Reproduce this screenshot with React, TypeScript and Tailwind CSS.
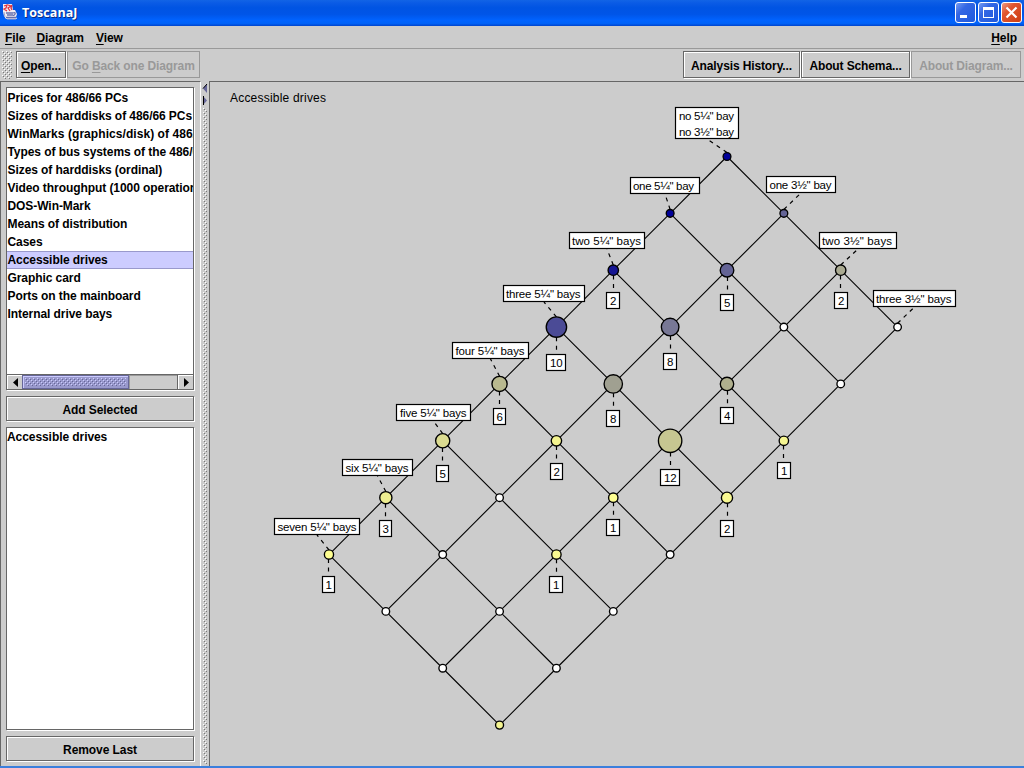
import React from "react";

const schemas = [
  "Prices for 486/66 PCs",
  "Sizes of harddisks of 486/66 PCs",
  "WinMarks (graphics/disk) of 486/66",
  "Types of bus systems of the 486/66",
  "Sizes of harddisks (ordinal)",
  "Video throughput (1000 operations)",
  "DOS-Win-Mark",
  "Means of distribution",
  "Cases",
  "Accessible drives",
  "Graphic card",
  "Ports on the mainboard",
  "Internal drive bays",
];

// Lattice nodes: [row along 5¼" axis, column along 3½" axis, radius, fill]
const styled: [number, number, number, string][] = [
  [0, 0, 3.9, "#000099"], [1, 0, 3.9, "#000099"], [0, 1, 3.9, "#646496"],
  [2, 0, 5.2, "#161693"], [1, 1, 6.8, "#646496"], [0, 2, 5.2, "#aaaa91"],
  [3, 0, 10.2, "#4b4b96"], [2, 1, 8.8, "#787896"], [3, 1, 9.2, "#a0a091"],
  [2, 2, 6.7, "#b0b08e"], [4, 0, 7.6, "#b9b98f"], [5, 0, 7.1, "#dcdc91"],
  [4, 1, 5.2, "#f3f38f"], [3, 2, 11.7, "#c6c691"], [2, 3, 4.7, "#f5f591"],
  [6, 0, 6.1, "#eeee91"], [4, 2, 4.7, "#ffff91"], [3, 3, 5.6, "#f8f891"],
  [7, 0, 4.6, "#ffff91"], [5, 2, 4.7, "#f8f891"], [7, 3, 4, "#f5f591"],
];

const px = (i: number, j: number) => 727 - 56.86 * i + 56.86 * j;
const py = (i: number, j: number) => 156.5 + 56.86 * (i + j);

const nodes: { i: number; j: number; r: number; fill: string }[] = [];
for (let i = 0; i < 8; i++)
  for (let j = 0; j < 4; j++) {
    const s = styled.find((n) => n[0] === i && n[1] === j);
    nodes.push({ i, j, r: s ? s[2] : 3.8, fill: s ? s[3] : "#ffffff" });
  }

// Attribute labels: [row, column, left, top, right, bottom, lines, text left, text right]
const labels: [number, number, number, number, number, number, string[], number, number][] = [
  [0, 0, 675, 107, 739, 139, ['no 5¼" bay', 'no 3½" bay'], 679, 734],
  [1, 0, 630, 177, 700, 194, ['one 5¼" bay'], 633, 694],
  [2, 0, 569, 232, 645, 249, ['two 5¼" bays'], 572, 641],
  [3, 0, 503, 285, 585, 302, ['three 5¼" bays'], 506, 580.5],
  [4, 0, 452, 342, 529, 359, ['four 5¼" bays'], 455.5, 524.5],
  [5, 0, 396, 404, 471, 421, ['five 5¼" bays'], 400, 466.5],
  [6, 0, 342, 459, 413, 476, ['six 5¼" bays'], 345.5, 408.5],
  [7, 0, 274, 518, 360, 535, ['seven 5¼" bays'], 277.5, 356.5],
  [0, 1, 766, 176, 836, 193, ['one 3½" bay'], 769.5, 831.5],
  [0, 2, 819, 232, 897, 249, ['two 3½" bays'], 822, 892],
  [0, 3, 873, 290, 956, 307, ['three 3½" bays'], 876, 951.5],
];

// Object counts: [row, column, left, top, right, value]
const counts: [number, number, number, number, number, string][] = [
  [2, 0, 606, 292, 620, "2"], [1, 1, 720, 294, 734, "5"], [0, 2, 834, 292, 848, "2"],
  [3, 0, 546, 354, 566, "10"], [2, 1, 663, 353, 677, "8"], [3, 1, 606, 410, 620, "8"],
  [2, 2, 720, 407, 734, "4"], [4, 0, 493, 408, 506, "6"], [5, 0, 436, 465, 449, "5"],
  [4, 1, 550, 463, 563, "2"], [3, 2, 660, 469, 680, "12"], [2, 3, 777, 462, 791, "1"],
  [6, 0, 379, 520, 392, "3"], [4, 2, 606, 519, 620, "1"], [3, 3, 720, 520, 734, "2"],
  [7, 0, 322, 576, 335, "1"], [5, 2, 549, 576, 563, "1"],
];

const radius = (i: number, j: number) => nodes[i * 4 + j].r;

function Diagram() {
  return (
    <svg
      width="814"
      height="684"
      viewBox="210 82 814 684"
      className="block font-['Liberation_Sans',sans-serif] font-normal tracking-normal"
    >
      <text x="230" y="102" fontSize="12" textLength="96">Accessible drives</text>
      <g stroke="#000" strokeWidth="1.1">
        {nodes.map(({ i, j }) => (
          <React.Fragment key={`${i}-${j}`}>
            {i < 7 && <line x1={px(i, j)} y1={py(i, j)} x2={px(i + 1, j)} y2={py(i + 1, j)} />}
            {j < 3 && <line x1={px(i, j)} y1={py(i, j)} x2={px(i, j + 1)} y2={py(i, j + 1)} />}
          </React.Fragment>
        ))}
      </g>
      <g stroke="#000" strokeWidth="1.35">
        {nodes.map(({ i, j, r, fill }) => (
          <circle key={`${i}-${j}`} cx={px(i, j)} cy={py(i, j)} r={r} fill={fill} />
        ))}
      </g>
      <g stroke="#000" strokeWidth="1.2" strokeDasharray="4 4.5">
        {labels.map(([i, j, l, , r, b]) => (
          <line key={`${i}-${j}`} x1={px(i, j)} y1={py(i, j) - radius(i, j)} x2={(l + r) / 2} y2={b} />
        ))}
        {counts.map(([i, j, , t]) => (
          <line key={`c${i}-${j}`} x1={Math.floor(px(i, j)) + 0.5} y1={py(i, j) + radius(i, j)} x2={Math.floor(px(i, j)) + 0.5} y2={t} />
        ))}
      </g>
      {labels.map(([i, j, l, t, r, b, lines, tl, tr]) => (
        <g key={`${i}-${j}`}>
          <rect x={l + 0.5} y={t + 0.5} width={r - l - 1} height={b - t - 1} fill="#fff" stroke="#000" strokeWidth="1.2" />
          {lines.map((s, k) => (
            <text key={s} x={tl} y={t + 13 + k * 16} fontSize="11.5" textLength={tr - tl}>{s}</text>
          ))}
        </g>
      ))}
      {counts.map(([i, j, l, t, r, v]) => (
        <g key={`${i}-${j}`}>
          <rect x={l + 0.5} y={t + 0.5} width={r - l - 1} height={16} fill="#fff" stroke="#000" strokeWidth="1.2" />
          <text x={(l + r) / 2 + 0.3} y={t + 13} fontSize="11.5" textAnchor="middle">{v}</text>
        </g>
      ))}
    </svg>
  );
}

function Btn({ children, disabled, className }: { children: React.ReactNode; disabled?: boolean; className: string }) {
  return (
    <div
      className={
        "box-border flex items-center justify-center whitespace-nowrap border pt-[2px] " +
        (disabled
          ? "border-[#999] text-[#999] "
          : "border-[#666] shadow-[inset_1px_1px_0_#fff,1px_1px_0_#fff] ") +
        className
      }
    >
      <span>{children}</span>
    </div>
  );
}

const U = ({ children }: { children: React.ReactNode }) => (
  <span className="underline decoration-1 underline-offset-2">{children}</span>
);

const bumps =
  "bg-[radial-gradient(circle_at_0.5px_0.5px,#fff_0.7px,transparent_0.8px),radial-gradient(circle_at_2.5px_2.5px,#fff_0.7px,transparent_0.8px),radial-gradient(circle_at_1.5px_1.5px,#777_0.7px,transparent_0.8px),radial-gradient(circle_at_3.5px_3.5px,#777_0.7px,transparent_0.8px)] bg-[length:4px_4px]";

function JavaIcon() {
  return (
    <svg width="16" height="16" viewBox="0 0 16 16" className="block">
      <path d="M1 0h9l1 6h2l2 4-1 3 1 2H4l-2-3-1-4Z" fill="#f1edf4" />
      <path d="M2 2l3-1-1 3-2 1 3 2M6 1l3 1-3 2 2 3M10 1l-1 3 1 2" fill="none" stroke="#e3343e" strokeWidth="1.3" />
      <path d="M4 9h7M5 11h6M4 13.5h10M11 9q3-1 2 1t-2 1" fill="none" stroke="#6670ad" strokeWidth="1.3" />
      <path d="M2 8l1 5M5 15h9" fill="none" stroke="#a8a7c9" />
    </svg>
  );
}

export default function App() {
  return (
    <div className="flex h-[768px] w-[1024px] flex-col overflow-hidden bg-[#ccc] font-['Liberation_Sans',sans-serif] text-[12px] font-bold leading-[18px] tracking-[-0.07px] text-black">
      <div className="flex h-[26px] shrink-0 items-center bg-[linear-gradient(#1264e6_0%,#0a5be5_12%,#0054e3_30%,#0055e8_55%,#0063ff_78%,#0062f8_90%,#0044cc_100%)] pl-[2px] pr-[2px]">
        <div className="-mt-[3px]"><JavaIcon /></div>
        <span className="ml-1 flex-1 font-['Open_Sans',sans-serif] text-[12.5px] tracking-[0.05px] text-white [text-shadow:1px_1px_0_#0a2a80]">ToscanaJ</span>
        <div className="-mt-px flex gap-[2px]">
          <svg width="21" height="21" viewBox="0 0 21 21">
            <defs>
              <linearGradient id="blue" x1="0" y1="0" x2="1" y2="1">
                <stop offset="0" stopColor="#7ba0f3" /><stop offset=".35" stopColor="#3467e4" /><stop offset="1" stopColor="#1c58dd" />
              </linearGradient>
              <linearGradient id="red" x1="0" y1="0" x2="1" y2="1">
                <stop offset="0" stopColor="#f0a08a" /><stop offset=".35" stopColor="#e1562f" /><stop offset="1" stopColor="#cc3d12" />
              </linearGradient>
            </defs>
            <rect x=".5" y=".5" width="20" height="20" rx="2.5" fill="url(#blue)" stroke="#fff" />
            <path d="M5 13h7v3H5z" fill="#fff" />
          </svg>
          <svg width="21" height="21" viewBox="0 0 21 21">
            <rect x=".5" y=".5" width="20" height="20" rx="2.5" fill="url(#blue)" stroke="#fff" />
            <path d="M5 5h11v11H5zM6 8v7h9V8z" fillRule="evenodd" fill="#fff" />
          </svg>
          <svg width="21" height="21" viewBox="0 0 21 21">
            <rect x=".5" y=".5" width="20" height="20" rx="2.5" fill="url(#red)" stroke="#fff" />
            <path d="M5.5 5.5l10 10m0-10l-10 10" stroke="#fff" strokeWidth="2.2" />
          </svg>
        </div>
      </div>

      <div className="flex h-[23px] shrink-0 items-center gap-3 border-b border-[#999] pl-[5px] pr-[7px] pt-[2px]">
        <span className="-mr-px"><U>F</U>ile</span>
        <span><U>D</U>iagram</span>
        <span><U>V</U>iew</span>
        <span className="ml-auto"><U>H</U>elp</span>
      </div>

      <div className="flex h-8 shrink-0 pl-[2px] pr-[3px] pt-[2px]">
        <div className={"h-[28px] w-[10px] " + bumps} />
        <Btn className="ml-1 h-[27px] w-[50px]"><U>O</U>pen...</Btn>
        <Btn disabled className="ml-px h-[27px] w-[133px] tracking-[-0.12px]">Go <U>B</U>ack one Diagram</Btn>
        <Btn className="ml-auto h-[27px] w-[117px] tracking-[-0.12px]">Analysis History...</Btn>
        <Btn className="ml-px h-[27px] w-[109px] tracking-[-0.12px]">About Schema...</Btn>
        <Btn disabled className="ml-px h-[27px] w-[110px] tracking-[-0.15px]">About Diagram...</Btn>
      </div>

      <div className="flex h-[685px] shrink-0">
        <div className="flex w-[201px] shrink-0 flex-col border-l border-r border-t border-l-[#666] border-r-white border-t-[#666] px-[5px] pt-[5px]">
          <div className="flex h-[303px] w-[188px] shrink-0 flex-col border border-[#666] bg-white shadow-[1px_1px_0_#fff]">
            <div className="h-[286px] overflow-hidden pt-px">
              {schemas.map((s) => (
                <div
                  key={s}
                  className={
                    "h-[18px] whitespace-nowrap pl-[0.5px] " +
                    (s === "Accessible drives" ? "bg-[#ccccff] shadow-[inset_0_1px_0_#9999cc,inset_0_-1px_0_#9999cc] " : "") +
                    (s.startsWith("WinMarks") ? "tracking-[0.06px]" : "")
                  }
                >
                  {s}
                </div>
              ))}
            </div>
            <div className="flex h-[15px] border-t border-[#666] bg-[#ccc]">
              <div className="flex w-[15px] items-center justify-center border-l border-t border-white">
                <svg width="5" height="9"><path d="M5 0v9L0 4.5z" /></svg>
              </div>
              <div className="flex w-[107px] border border-[#666699] bg-[#9999cc] p-[2px] shadow-[inset_1px_1px_0_#ccccff]">
                <div className="h-full w-full bg-[radial-gradient(circle_at_0.5px_0.5px,#ccf_0.7px,transparent_0.8px),radial-gradient(circle_at_2.5px_2.5px,#ccf_0.7px,transparent_0.8px),radial-gradient(circle_at_1.5px_1.5px,#669_0.7px,transparent_0.8px),radial-gradient(circle_at_3.5px_3.5px,#669_0.7px,transparent_0.8px)] bg-[length:4px_4px]" />
              </div>
              <div className="flex-1 border-r border-[#666] shadow-[inset_1px_1px_0_#999]" />
              <div className="flex w-[15px] items-center justify-center border-l border-t border-white">
                <svg width="5" height="9"><path d="M0 0v9l5-4.5z" /></svg>
              </div>
            </div>
          </div>
          <Btn className="mt-[6px] h-[25px] w-[188px] shrink-0">Add Selected</Btn>
          <div className="mt-[6px] h-[303px] w-[188px] shrink-0 border border-[#666] bg-white shadow-[1px_1px_0_#fff]">
            <div className="whitespace-nowrap">Accessible drives</div>
          </div>
          <Btn className="mt-[6px] h-[25px] w-[188px] shrink-0">Remove Last</Btn>
        </div>
        <div className="flex w-[8px] shrink-0 flex-col items-center pt-[3px]">
          <svg width="6" height="22" className="shrink-0">
            <path d="M5 0v9L1 4.5z" fill="#666699" /><path d="M5 0L1 4.5" stroke="#000" />
            <path d="M1 12v9l4-4.5z" fill="#666699" /><path d="M1.5 12v9" stroke="#000" />
          </svg>
          <div className={"mt-[2px] mb-[2px] w-[4px] flex-1 " + bumps} />
        </div>
        <div className="flex-1 border-l border-t border-[#666]">
          <Diagram />
        </div>
      </div>
      <div className="h-[2px] shrink-0 bg-[#3b7fdc]" />
    </div>
  );
}
